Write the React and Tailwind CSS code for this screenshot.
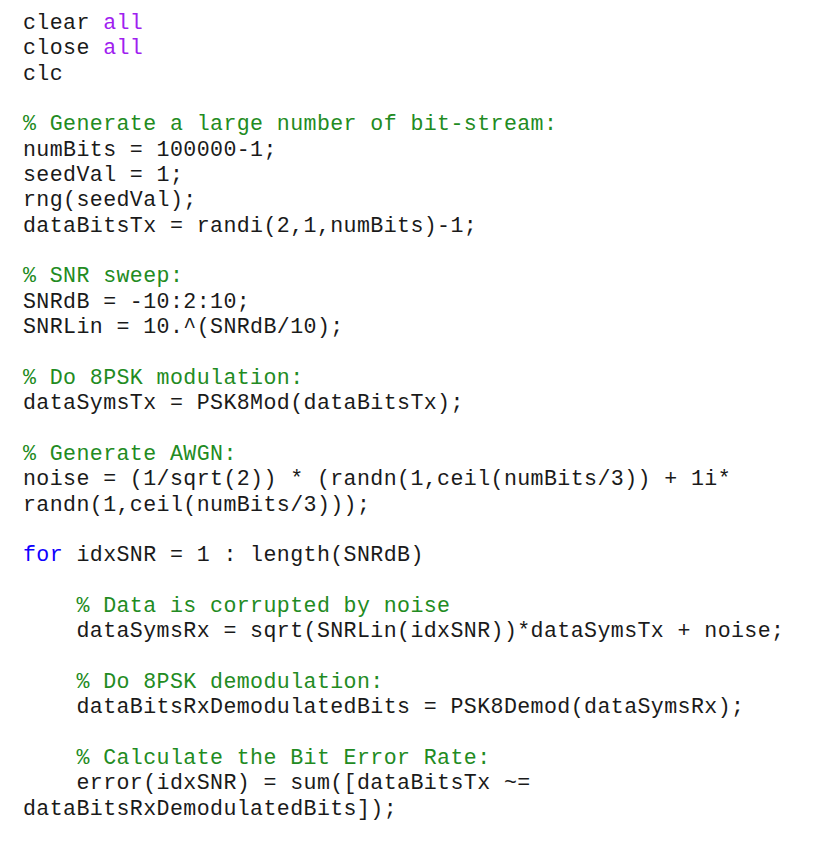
import React from "react";

// token helpers
const K = ({ children }) => <span className="text-[#0e00ff]">{children}</span>;
const S = ({ children }) => <span className="text-[#a020f0]">{children}</span>;
const C = ({ children }) => <span className="text-[#228b22]">{children}</span>;

const lines = [
  <>clear <S>all</S></>,
  <>close <S>all</S></>,
  <>clc</>,
  "",
  <C>% Generate a large number of bit-stream:</C>,
  <>numBits = 100000-1;</>,
  <>seedVal = 1;</>,
  <>rng(seedVal);</>,
  <>dataBitsTx = randi(2,1,numBits)-1;</>,
  "",
  <C>% SNR sweep:</C>,
  <>SNRdB = -10:2:10;</>,
  <>SNRLin = 10.^(SNRdB/10);</>,
  "",
  <C>% Do 8PSK modulation:</C>,
  <>dataSymsTx = PSK8Mod(dataBitsTx);</>,
  "",
  <C>% Generate AWGN:</C>,
  <>noise = (1/sqrt(2)) * (randn(1,ceil(numBits/3)) + 1i*</>,
  <>randn(1,ceil(numBits/3)));</>,
  "",
  <><K>for</K> idxSNR = 1 : length(SNRdB)</>,
  "",
  <>    <C>% Data is corrupted by noise</C></>,
  <>    dataSymsRx = sqrt(SNRLin(idxSNR))*dataSymsTx + noise;</>,
  "",
  <>    <C>% Do 8PSK demodulation:</C></>,
  <>    dataBitsRxDemodulatedBits = PSK8Demod(dataSymsRx);</>,
  "",
  <>    <C>% Calculate the Bit Error Rate:</C></>,
  <>    error(idxSNR) = sum([dataBitsTx ~=</>,
  <>dataBitsRxDemodulatedBits]);</>,
];

const App = () => {
  return (
    <div className="min-h-[866px] w-[839px] bg-white pt-[11px] pl-[23px]">
      <pre className="font-['Liberation_Mono','Courier_New',monospace] text-[21.6px] leading-[25.35px] tracking-[0.4px] text-[#1a1a1a]">
        {lines.map((l, i) => (
          <div key={i} className="h-[25.35px]">
            {l}
          </div>
        ))}
      </pre>
    </div>
  );
};

export default App;
